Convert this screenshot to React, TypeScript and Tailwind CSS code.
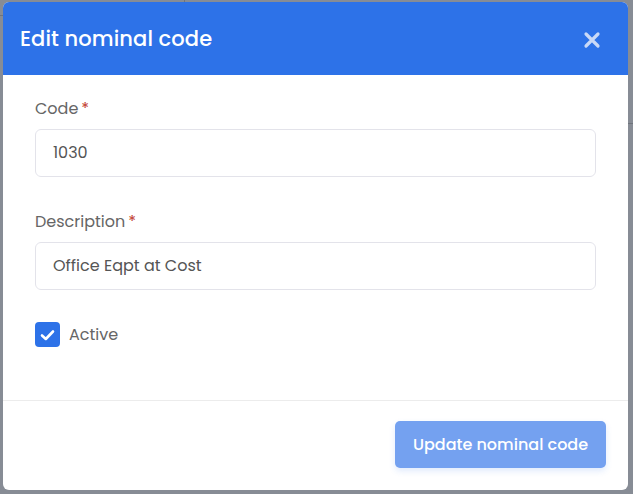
import React from "react";

export default function App() {
  const font = { fontFamily: "Poppins, Inter, 'Noto Sans', sans-serif" };
  return (
    <div className="relative w-[633px] h-[494px] bg-[#878c95] overflow-hidden" style={font}>
      <div className="absolute left-0 top-[15px] w-[3px] h-px bg-[#6f747c]" />
      <div className="absolute left-[184px] top-0 w-px h-[2px] bg-[#6f747c]" />
      <div className="absolute right-0 top-[123px] w-[5px] h-px bg-[#6f747c]" />
      <div className="absolute left-[3px] top-[2px] w-[625px] h-[488px] bg-white rounded-[6px] overflow-hidden flex flex-col">
        <div className="h-[73px] bg-[#2d72e8] flex items-center justify-between pl-[17px] pr-[27px] shrink-0">
          <h1 className="text-white text-[21px] font-medium tracking-[0.1px]">Edit nominal code</h1>
          <svg width="18" height="18" viewBox="0 0 18 18" className="mt-[3px]">
            <path d="M3 3L15 15M15 3L3 15" stroke="#c9d9f7" strokeWidth="3.2" strokeLinecap="round" />
          </svg>
        </div>
        <div className="flex flex-col px-[32px] pt-[22px] h-[326px] border-b border-[#ececec]">
          <label className="text-[16px] text-[#666] leading-[24px]">
            Code<span className="text-[#c0392b] ml-[3px]">*</span>
          </label>
          <div className="mt-[8px] h-[48px] border border-[#e3e3ea] rounded-[6px] flex items-center px-[17px] text-[16px] text-[#555]">
            1030
          </div>
          <label className="mt-[33px] text-[16px] text-[#666] leading-[24px]">
            Description<span className="text-[#c0392b] ml-[3px]">*</span>
          </label>
          <div className="mt-[8px] h-[48px] border border-[#e3e3ea] rounded-[6px] flex items-center px-[17px] text-[16px] text-[#555]">
            Office Eqpt at Cost
          </div>
          <div className="mt-[32px] flex items-center gap-[9px]">
            <div className="w-[25px] h-[25px] rounded-[4px] bg-[#2d72e8] flex items-center justify-center">
              <svg width="15" height="12" viewBox="0 0 15 12">
                <path d="M2 6.5L5.8 10L13 2.5" stroke="white" strokeWidth="2.6" fill="none" strokeLinecap="round" strokeLinejoin="round" />
              </svg>
            </div>
            <span className="text-[16px] text-[#666]">Active</span>
          </div>
        </div>
        <div className="flex justify-end pr-[22px] pt-[20px]">
          <button className="w-[211px] h-[47px] rounded-[5px] bg-[#74a1f0] text-white text-[16px] font-medium shadow-[0_3px_6px_rgba(45,114,232,0.15)]">
            Update nominal code
          </button>
        </div>
      </div>
    </div>
  );
}
